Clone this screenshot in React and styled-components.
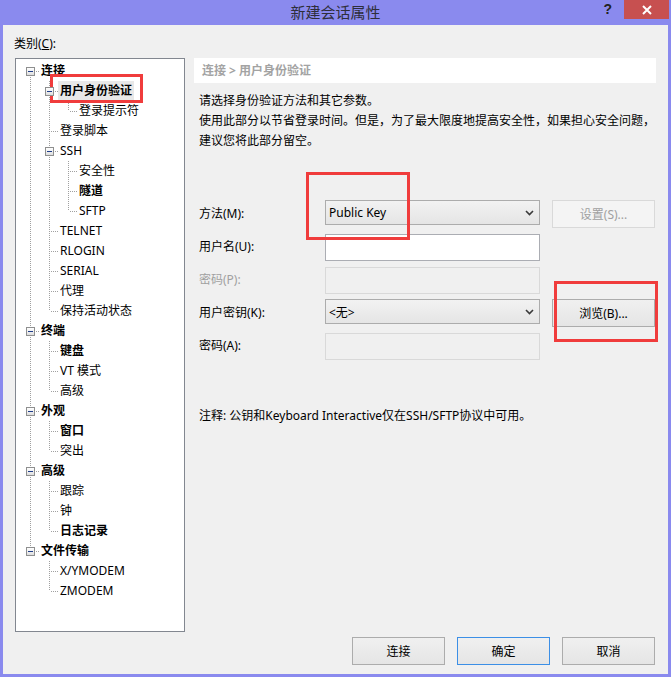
import React from "react";
import styled, { createGlobalStyle } from "styled-components";

const UI_FONT = `"Noto Sans", "Noto Sans CJK SC", sans-serif`;

const GlobalStyle = createGlobalStyle`
  html, body {
    margin: 0;
    padding: 0;
    background: #8a8aee;
  }
  body {
    font-family: ${UI_FONT};
    font-size: 12px;
    color: #000;
  }
`;

const treeData = [
  {
    label: "连接",
    bold: true,
    children: [
      { label: "用户身份验证", bold: true, selected: true, children: [{ label: "登录提示符" }] },
      { label: "登录脚本" },
      {
        label: "SSH",
        children: [{ label: "安全性" }, { label: "隧道", bold: true }, { label: "SFTP" }],
      },
      { label: "TELNET" },
      { label: "RLOGIN" },
      { label: "SERIAL" },
      { label: "代理" },
      { label: "保持活动状态" },
    ],
  },
  {
    label: "终端",
    bold: true,
    children: [{ label: "键盘", bold: true }, { label: "VT 模式" }, { label: "高级" }],
  },
  {
    label: "外观",
    bold: true,
    children: [{ label: "窗口", bold: true }, { label: "突出" }],
  },
  {
    label: "高级",
    bold: true,
    children: [{ label: "跟踪" }, { label: "钟" }, { label: "日志记录", bold: true }],
  },
  {
    label: "文件传输",
    bold: true,
    children: [{ label: "X/YMODEM" }, { label: "ZMODEM" }],
  },
];

// walk the tree into flat rows, remembering which ancestor lines keep going
function flatten(nodes, level = 0, guides = [], out = []) {
  nodes.forEach((n, i) => {
    const last = i === nodes.length - 1;
    out.push({
      ...n,
      key: `${level}-${out.length}`,
      guides,
      up: level > 0 || i > 0,
      down: !last,
      hasKids: !!n.children,
    });
    if (n.children) flatten(n.children, level + 1, [...guides, !last], out);
  });
  return out;
}

const rows = flatten(treeData);

const dotsV = "repeating-linear-gradient(to bottom, #a0a0a0 0 1px, transparent 1px 2px)";
const dotsH = "repeating-linear-gradient(to right, #a0a0a0 0 1px, transparent 1px 2px)";

export default function App() {
  return (
    <>
      <GlobalStyle />
      <Window>
        <TitleBar>
          <Title>新建会话属性</Title>
          <Controls>
            <Help>?</Help>
            <Close>
              <svg width="10" height="10" viewBox="0 0 10 10">
                <path d="M1 1 L9 9 M9 1 L1 9" stroke="#fff" strokeWidth="2" />
              </svg>
            </Close>
          </Controls>
        </TitleBar>

        <Body>
          <Caption>
            类别(<u>C</u>):
          </Caption>

          <Main>
            <Tree>
              {rows.map((r) => (
                <Row key={r.key}>
                  {r.guides.map((g, i) => (
                    <Guide key={i} $line={g} />
                  ))}
                  <Joint $up={r.up} $down={r.down}>
                    {r.hasKids && <Expander />}
                  </Joint>
                  <NodeLabel $bold={r.bold} $selected={r.selected}>
                    {r.label}
                  </NodeLabel>
                </Row>
              ))}
            </Tree>

            <Pane>
              <Crumb>连接 &gt; 用户身份验证</Crumb>
              <Desc>
                <div>请选择身份验证方法和其它参数。</div>
                <div>使用此部分以节省登录时间。但是，为了最大限度地提高安全性，如果担心安全问题，</div>
                <div>建议您将此部分留空。</div>
              </Desc>

              <Form>
                <FieldLabel>方法(M):</FieldLabel>
                <Select>
                  <span>Public Key</span>
                  <Chevron />
                </Select>
                <Button $w={103} disabled>
                  设置(S)...
                </Button>

                <FieldLabel>用户名(U):</FieldLabel>
                <Input />
                <span />

                <FieldLabel $disabled>密码(P):</FieldLabel>
                <Input $disabled />
                <span />

                <FieldLabel>用户密钥(K):</FieldLabel>
                <Select>
                  <span>&lt;无&gt;</span>
                  <Chevron />
                </Select>
                <Button $w={103}>浏览(B)...</Button>

                <FieldLabel>密码(A):</FieldLabel>
                <Input $disabled />
                <span />
              </Form>

              <Note>注释: 公钥和Keyboard Interactive仅在SSH/SFTP协议中可用。</Note>
            </Pane>
          </Main>

          <Footer>
            <Button $w={93}>连接</Button>
            <Button $w={93} $primary>
              确定
            </Button>
            <Button $w={93}>取消</Button>
          </Footer>
        </Body>

        {/* red annotation boxes drawn over the dialog */}
        <Mark $x={50} $y={74} $w={93} $h={29} />
        <Mark $x={306} $y={172} $w={104} $h={68} />
        <Mark $x={554} $y={281} $w={104} $h={61} />
      </Window>
    </>
  );
}

function Chevron() {
  return (
    <svg width="9" height="6" viewBox="0 0 9 6">
      <path d="M1 1 L4.5 4.5 L8 1" fill="none" stroke="#3a3a3a" strokeWidth="1.6" />
    </svg>
  );
}

const Window = styled.div`
  position: relative;
  width: 671px;
  height: 677px;
  background: #8a8aee;
  display: flex;
  flex-direction: column;
  overflow: hidden;
`;

const TitleBar = styled.div`
  height: 25px;
  flex: none;
  display: grid;
  grid-template-columns: 1fr auto 1fr;
  align-items: start;
`;

const Title = styled.div`
  grid-column: 2;
  font-size: 15px;
  line-height: 24px;
  color: #2e2e3a;
`;

const Controls = styled.div`
  grid-column: 3;
  justify-self: end;
  display: flex;
  align-items: flex-start;
  margin-right: 2px;
`;

const Help = styled.div`
  font-family: "Liberation Sans", sans-serif;
  font-weight: 700;
  font-size: 14px;
  line-height: 18px;
  color: #222;
  margin-right: 12px;
`;

const Close = styled.div`
  width: 45px;
  height: 19px;
  background: #c75050;
  display: flex;
  align-items: center;
  justify-content: center;
`;

const Body = styled.div`
  flex: 1;
  margin: 0 3px 3px;
  background: #f0f0f0;
  padding: 11px 12px 9px;
  display: flex;
  flex-direction: column;
`;

const Caption = styled.div`
  line-height: 16px;
  height: 16px;
  margin-bottom: 6px;
  margin-left: -1px;
`;

const Main = styled.div`
  display: flex;
  gap: 9px;
  height: 574px;
`;

const Tree = styled.div`
  flex: none;
  width: 170px;
  box-sizing: border-box;
  border: 1px solid #828790;
  background: #fff;
  padding: 2px 0 0 5px;
`;

const Row = styled.div`
  display: flex;
  height: 20px;
`;

const Guide = styled.span`
  position: relative;
  width: 19px;
  flex: none;
  &::before {
    content: "";
    position: absolute;
    left: 9px;
    top: 0;
    bottom: 0;
    width: 1px;
    background: ${(p) => (p.$line ? dotsV : "none")};
  }
`;

const Joint = styled.span`
  position: relative;
  width: 19px;
  flex: none;
  &::before {
    content: "";
    position: absolute;
    left: 9px;
    width: 1px;
    top: ${(p) => (p.$up ? "0" : "10px")};
    bottom: ${(p) => (p.$down ? "0" : "10px")};
    background: ${dotsV};
  }
  &::after {
    content: "";
    position: absolute;
    left: 11px;
    right: 0;
    top: 10px;
    height: 1px;
    background: ${dotsH};
  }
`;

const Expander = styled.span`
  position: absolute;
  z-index: 1;
  left: 5px;
  top: 6px;
  width: 9px;
  height: 9px;
  box-sizing: border-box;
  border: 1px solid #8e8f8f;
  background: linear-gradient(#ffffff, #dedede);
  &::after {
    content: "";
    position: absolute;
    left: 1px;
    top: 3px;
    width: 5px;
    height: 1px;
    background: #1f3d8a;
  }
`;

const NodeLabel = styled.span`
  margin-left: -1px;
  padding: 0 2px;
  height: 19px;
  line-height: 19px;
  white-space: nowrap;
  font-weight: ${(p) => (p.$bold ? 700 : 400)};
  background: ${(p) => (p.$selected ? "#e8e8e8" : "transparent")};
`;

const Pane = styled.div`
  flex: 1;
  min-width: 0;
  display: flex;
  flex-direction: column;
`;

const Crumb = styled.div`
  height: 25px;
  line-height: 25px;
  background: #fff;
  padding-left: 8px;
  font-weight: 700;
  color: #a3a3a3;
`;

const Desc = styled.div`
  margin-top: 8px;
  padding-left: 5px;
  line-height: 20px;
  white-space: nowrap;
`;

const Form = styled.div`
  margin-top: 49px;
  padding-left: 5px;
  display: grid;
  grid-template-columns: 114px 215px 103px;
  grid-auto-rows: 28px;
  column-gap: 12px;
  row-gap: 5px;
  align-items: center;
`;

const FieldLabel = styled.span`
  color: ${(p) => (p.$disabled ? "#a0a0a0" : "#000")};
  line-height: 16px;
`;

const Select = styled.div`
  height: 25px;
  box-sizing: border-box;
  border: 1px solid #acacac;
  background: linear-gradient(#f2f2f2, #e5e5e5);
  display: flex;
  align-items: center;
  justify-content: space-between;
  padding: 0 5px 0 3px;
  align-self: start;
`;

const Input = styled.div`
  height: 27px;
  box-sizing: border-box;
  border: 1px solid ${(p) => (p.$disabled ? "#d9d9d9" : "#abadb3")};
  background: ${(p) => (p.$disabled ? "#f0f0f0" : "#fff")};
`;

const Button = styled.button`
  width: ${(p) => p.$w}px;
  height: 28px;
  box-sizing: border-box;
  padding: 0;
  font-family: ${UI_FONT};
  font-size: 12px;
  color: #000;
  border: 1px solid ${(p) => (p.$primary ? "#3c8fe6" : "#acacac")};
  background: linear-gradient(#f0f0f0, #e5e5e5);
  &:disabled {
    color: #a0a0a0;
    border-color: #d9d9d9;
    background: #f4f4f4;
  }
`;

const Note = styled.div`
  margin-top: 46px;
  padding-left: 5px;
  line-height: 20px;
  white-space: nowrap;
`;

const Footer = styled.div`
  display: flex;
  justify-content: flex-end;
  gap: 12px;
  margin-top: 5px;
  padding-right: 1px;
`;

const Mark = styled.div`
  position: absolute;
  left: ${(p) => p.$x}px;
  top: ${(p) => p.$y}px;
  width: ${(p) => p.$w}px;
  height: ${(p) => p.$h}px;
  box-sizing: border-box;
  border: 3px solid #f03c3c;
  pointer-events: none;
`;
